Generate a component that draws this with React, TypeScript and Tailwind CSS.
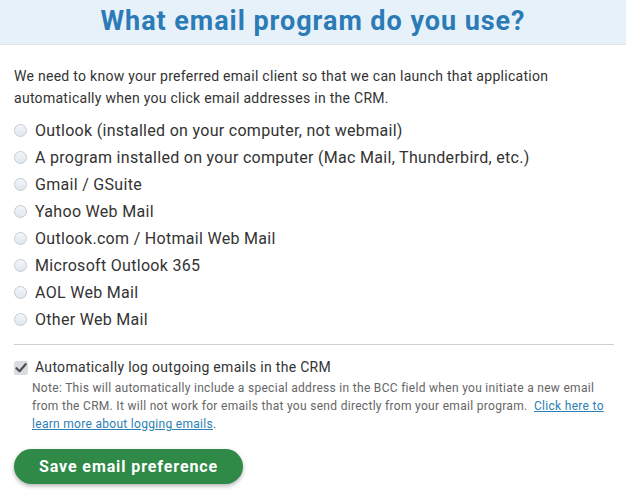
import React from "react";

const options = [
  "Outlook (installed on your computer, not webmail)",
  "A program installed on your computer (Mac Mail, Thunderbird, etc.)",
  "Gmail / GSuite",
  "Yahoo Web Mail",
  "Outlook.com / Hotmail Web Mail",
  "Microsoft Outlook 365",
  "AOL Web Mail",
  "Other Web Mail",
];

export default function App() {
  return (
    <div className="w-[626px] h-[494px] bg-white overflow-hidden" style={{ fontFamily: "Roboto, 'Liberation Sans', sans-serif" }}>
      <div className="h-[45px] bg-[#e7f1f9] border-b border-[#dde3e8] flex items-center justify-center">
        <h1 className="text-[27px] font-bold text-[#2b7bb7] leading-none tracking-[0.95px] -mt-[1px]">What email program do you use?</h1>
      </div>
      <div className="px-[14px]">
        <p className="mt-[20px] text-[14px] leading-[22px] text-[#333] tracking-[0.28px]">
          We need to know your preferred email client so that we can launch that application automatically when you click email addresses in the CRM.
        </p>
        <div className="mt-[8px] flex flex-col">
          {options.map((o) => (
            <label key={o} className="h-[27px] flex items-center gap-[8px] text-[16px] text-[#333] tracking-[0.3px]">
              <span className="w-[13px] h-[13px] rounded-full border border-[#c5ccd3] bg-gradient-to-b from-[#f3f6f9] to-[#dfe7ee] shrink-0" />
              <span>{o}</span>
            </label>
          ))}
        </div>
        <div className="mt-[11px] border-t border-[#cfcfcf] w-[600px]" />
        <div className="mt-[12px] flex items-center gap-[7px] text-[14px] text-[#333] tracking-[0.3px]">
          <span className="w-[14px] h-[14px] rounded-[2px] bg-[#d9dde1] flex items-center justify-center shrink-0">
            <svg width="12" height="12" viewBox="0 0 12 12">
              <path d="M1.5 6.2 L4.6 9.2 L10.6 2.2" fill="none" stroke="#4a4f55" strokeWidth="2.2" strokeLinecap="round" strokeLinejoin="round" />
            </svg>
          </span>
          <span>Automatically log outgoing emails in the CRM</span>
        </div>
        <p className="mt-[1px] ml-[18px] text-[12px] leading-[18px] text-[#666] w-[590px] tracking-[0.3px]">
          Note: This will automatically include a special address in the BCC field when you initiate a new email from the CRM. It will not work for emails that you send directly from your email program.{"\u00a0 "}
          <a className="text-[#2d7fb4] underline">Click here to learn more about logging emails</a>.
        </p>
        <button className="mt-[16px] w-[229px] h-[35px] rounded-full bg-[#2e8a46] text-white text-[16px] font-bold shadow-[0_2px_4px_rgba(0,0,0,0.3)] tracking-[0.9px]">
          Save email preference
        </button>
      </div>
    </div>
  );
}
